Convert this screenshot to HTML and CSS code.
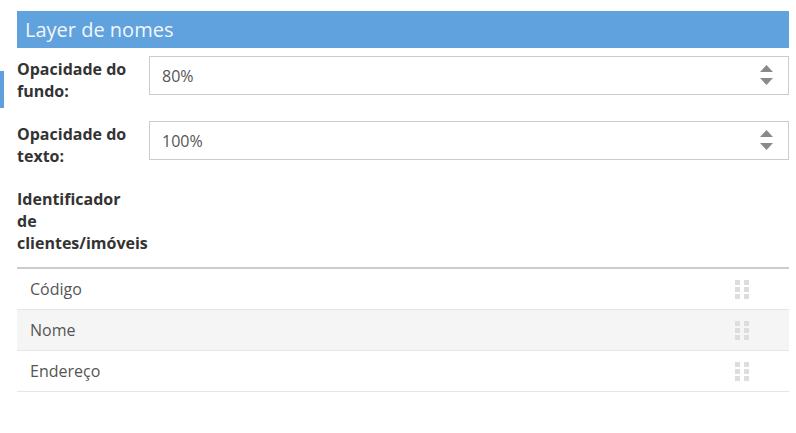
FILE: index.html
```html
<!DOCTYPE html>
<html lang="pt">
<head>
<meta charset="utf-8">
<link rel="stylesheet" href="styles.css">
</head>
<body>
<div class="side-marker"></div>
<div class="panel">
  <div class="panel-header">Layer de nomes</div>
  <div class="form-row">
    <label class="form-label">Opacidade do fundo:</label>
    <div class="spin-input">
      <span class="spin-value">80%</span>
      <span class="spin-arrows">
        <svg width="13" height="21" viewBox="0 0 13 21"><polygon points="6.5,0 13,7 0,7" fill="#8a8a8a"/><polygon points="0,13 13,13 6.5,20" fill="#8a8a8a"/></svg>
      </span>
    </div>
  </div>
  <div class="form-row">
    <label class="form-label">Opacidade do texto:</label>
    <div class="spin-input">
      <span class="spin-value">100%</span>
      <span class="spin-arrows">
        <svg width="13" height="21" viewBox="0 0 13 21"><polygon points="6.5,0 13,7 0,7" fill="#8a8a8a"/><polygon points="0,13 13,13 6.5,20" fill="#8a8a8a"/></svg>
      </span>
    </div>
  </div>
  <div class="form-row last">
    <label class="form-label">Identificador de clientes/imóveis</label>
  </div>
  <ul class="sort-list">
    <li class="sort-item"><span>Código</span><span class="grip"><i></i><i></i><i></i><i></i><i></i><i></i></span></li>
    <li class="sort-item alt"><span>Nome</span><span class="grip"><i></i><i></i><i></i><i></i><i></i><i></i></span></li>
    <li class="sort-item"><span>Endereço</span><span class="grip"><i></i><i></i><i></i><i></i><i></i><i></i></span></li>
  </ul>
</div>
</body>
</html>
```

FILE: styles.css
```css
* { box-sizing: border-box; }
html, body {
  margin: 0;
  padding: 0;
  background: #fff;
  font-family: "Open Sans", "Noto Sans", sans-serif;
  color: #333;
}
body {
  position: relative;
  width: 796px;
  height: 433px;
  overflow: hidden;
}
.side-marker {
  position: absolute;
  left: 0;
  top: 71px;
  width: 4px;
  height: 37px;
  background: #5fa0dc;
}
.panel {
  margin: 11px 7px 0 17px;
}
.panel-header {
  height: 37px;
  background: #5fa2dd;
  color: #f2f6fb;
  font-size: 20px;
  line-height: 37px;
  padding-left: 8px;
}
.form-row {
  display: flex;
  align-items: flex-start;
  margin-top: 8px;
  margin-bottom: 19px;
}
.form-row + .form-row { margin-top: 0; }
.form-row.last { margin-bottom: 13px; }
.form-label {
  width: 118px;
  flex: none;
  margin-right: 14px;
  padding-top: 2px;
  font-weight: 700;
  font-size: 16px;
  line-height: 22px;
  color: #333;
}
.spin-input {
  flex: 1;
  height: 39px;
  border: 1px solid #cccccc;
  display: flex;
  align-items: center;
  justify-content: space-between;
  padding: 0 15px 0 12px;
}
.spin-value {
  font-size: 16px;
  color: #555;
}
.spin-arrows { display: flex; }
.sort-list {
  list-style: none;
  margin: 0;
  padding: 0;
  border-top: 2px solid #cccccc;
}
.sort-item {
  display: flex;
  align-items: center;
  justify-content: space-between;
  height: 41px;
  border-bottom: 1px solid #e6e6e6;
  padding: 0 40px 0 13px;
  font-size: 16px;
  color: #555;
}
.sort-item.alt { background: #f5f5f5; }
.grip {
  display: grid;
  grid-template-columns: 5px 5px;
  grid-auto-rows: 5px;
  column-gap: 4px;
  row-gap: 2px;
}
.grip i {
  display: block;
  background: #dddddd;
}
```
